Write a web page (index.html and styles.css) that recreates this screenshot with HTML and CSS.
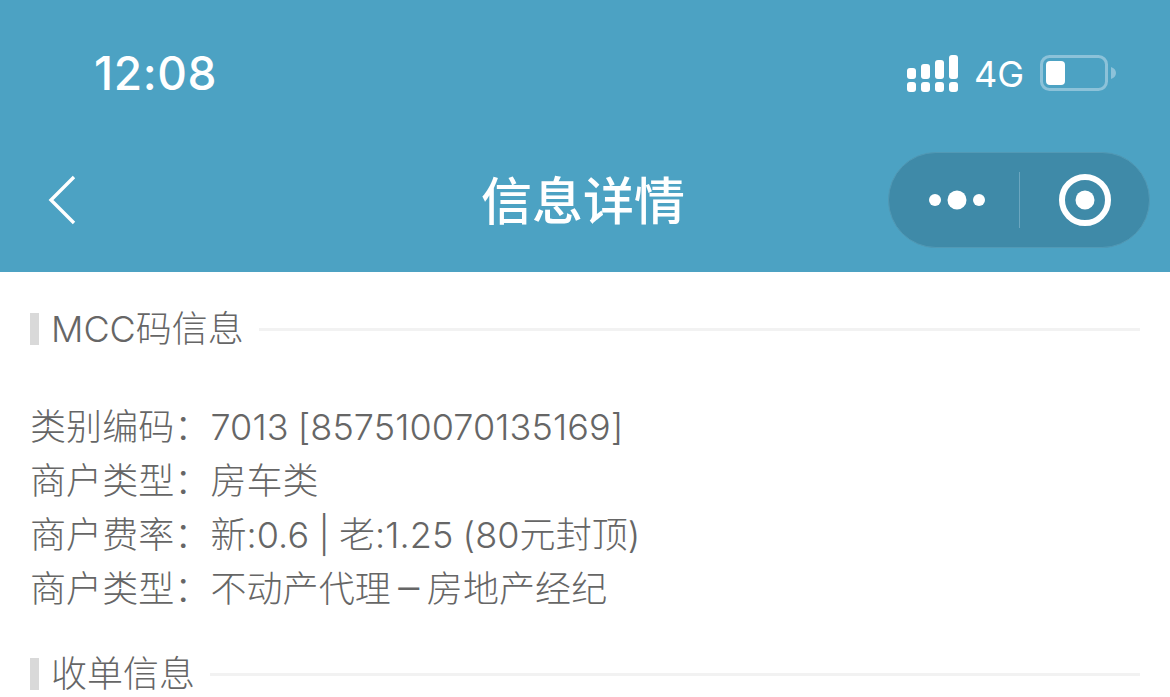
FILE: index.html
```html
<!DOCTYPE html>
<html lang="zh-CN">
<head>
<meta charset="utf-8">
<title>信息详情</title>
<link rel="stylesheet" href="styles.css">
</head>
<body>
<header class="header">
  <div class="status">
    <span class="time">12:08</span>
    <div class="status-right">
      <svg class="signal" width="52" height="38" viewBox="0 0 52 38">
        <g fill="#fff">
          <rect x="0" y="13" width="9" height="11" rx="3"/>
          <rect x="14" y="9" width="9" height="15" rx="3"/>
          <rect x="28" y="5" width="9" height="19" rx="3"/>
          <rect x="42" y="0" width="9" height="24" rx="3"/>
          <rect x="0" y="27" width="9" height="10" rx="3"/>
          <rect x="14" y="27" width="9" height="10" rx="3"/>
          <rect x="28" y="27" width="9" height="10" rx="3"/>
          <rect x="42" y="27" width="9" height="10" rx="3"/>
        </g>
      </svg>
      <span class="net">4G</span>
      <svg class="battery" width="76" height="38" viewBox="0 0 76 38">
        <rect x="1.5" y="1.5" width="65" height="33" rx="8" fill="none" stroke="#8cc2d9" stroke-width="3"/>
        <rect x="6" y="6" width="19" height="24" rx="4" fill="#fff"/>
        <path d="M71 12c3 1 5 3 5 6s-2 5-5 6z" fill="#8cc2d9"/>
      </svg>
    </div>
  </div>
  <nav class="nav">
    <svg class="back" width="32" height="52" viewBox="0 0 32 52">
      <path d="M27 3 L4 26 L27 49" fill="none" stroke="#fff" stroke-width="3.4"/>
    </svg>
    <h1 class="title">信息详情</h1>
    <div class="capsule">
      <svg class="more" width="60" height="24" viewBox="0 0 60 24">
        <g fill="#fff"><circle cx="7" cy="12" r="6"/><circle cx="29" cy="12" r="9.5"/><circle cx="51" cy="12" r="6"/></g>
      </svg>
      <span class="divider"></span>
      <svg class="target" width="54" height="54" viewBox="0 0 54 54">
        <circle cx="27" cy="27" r="23" fill="none" stroke="#fff" stroke-width="6"/>
        <circle cx="27" cy="27" r="9.5" fill="#fff"/>
      </svg>
    </div>
  </nav>
</header>
<main class="content">
  <div class="section-head">
    <h2 class="section-title">MCC码信息</h2>
    <span class="rule"></span>
  </div>
  <div class="info">
    <p>类别编码：7013 [857510070135169]</p>
    <p>商户类型：房车类</p>
    <p>商户费率：新:0.6 | 老:1.25 (80元封顶)</p>
    <p>商户类型：不动产代理<span class="dash">–</span>房地产经纪</p>
  </div>
  <div class="section-head">
    <h2 class="section-title">收单信息</h2>
    <span class="rule"></span>
  </div>
</main>
</body>
</html>
```

FILE: styles.css
```css
* { box-sizing: border-box; }
html, body { margin: 0; padding: 0; height: 100%; overflow: hidden; background: #fff; }
body { font-family: Inter, "Noto Sans CJK SC", sans-serif; color: #666; }

.header { background: #4ca2c3; height: 272px; color: #fff; display: flex; flex-direction: column; }

.status { height: 147px; padding: 44px 54px 0 94px; display: flex; justify-content: space-between; align-items: flex-start; }
.time { font-size: 46px; font-weight: 500; line-height: 58px; letter-spacing: 0.6px; }
.status-right { display: flex; align-items: center; height: 38px; margin-top: 11px; }
.net { font-size: 36px; line-height: 38px; margin: 0 16px 0 15px; font-weight: 400; }

.nav { position: relative; flex: 1; display: flex; align-items: center; justify-content: space-between; padding: 0 20px 19px 47px; }
.title { position: absolute; left: 0; right: 4px; top: 17px; margin: 0; text-align: center; font-size: 51px; line-height: 68px; font-weight: 500; font-family: "Noto Sans CJK SC", sans-serif; }
.capsule { width: 262px; height: 96px; border-radius: 48px; background: #3f8aa8; border: 1px solid #5299b5; display: flex; align-items: center; padding-left: 39px; }
.divider { width: 1px; height: 56px; background: #6ba6bf; margin-left: 31px; }
.target { margin-left: 38px; }

.content { padding: 41px 30px 0; }
.section-head { display: flex; align-items: center; height: 32px; }
.section-title { margin: 0; height: 32px; border-left: 9px solid #d9d9d9; padding-left: 12px; font-size: 36px; line-height: 32px; font-weight: 300; white-space: nowrap; }
.rule { flex: 1; height: 3px; background: #f2f2f2; margin-left: 15px; }

.info { margin-top: 55px; margin-bottom: 42px; font-size: 36px; line-height: 54px; font-weight: 300; word-spacing: -1px; letter-spacing: 0.08px; }
.info p { margin: 0; white-space: nowrap; }
.dash { display: inline-block; width: 36px; text-align: center; font-size: 42px; line-height: 1; }
```
